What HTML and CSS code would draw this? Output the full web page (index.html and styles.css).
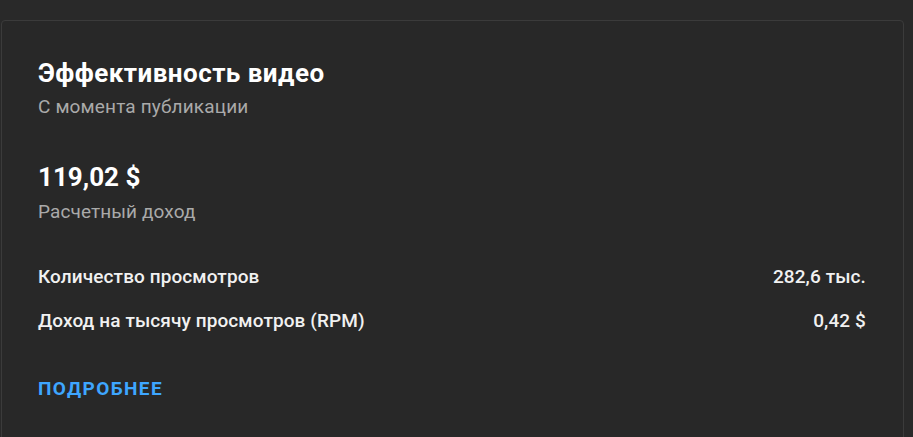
FILE: index.html
```html
<!DOCTYPE html>
<html lang="ru">
<head>
<meta charset="utf-8">
<link rel="stylesheet" href="styles.css">
</head>
<body>
<div class="page">
  <section class="card">
    <h2 class="title">Эффективность видео</h2>
    <div class="subtitle">С момента публикации</div>
    <div class="amount">119,02 $</div>
    <div class="amount-label">Расчетный доход</div>
    <div class="rows">
      <div class="row"><span>Количество просмотров</span><span>282,6 тыс.</span></div>
      <div class="row"><span>Доход на тысячу просмотров (RPM)</span><span>0,42 $</span></div>
    </div>
    <a class="more" href="#">ПОДРОБНЕЕ</a>
  </section>
</div>
</body>
</html>
```
FILE: styles.css
```css
html, body {
  margin: 0;
  padding: 0;
  background: #292929;
  overflow: hidden;
}
.page {
  padding: 20px 9px 0 1px;
  height: 437px;
  box-sizing: border-box;
  font-family: Roboto, "Noto Sans", sans-serif;
}
.card {
  background: #282828;
  border: 1px solid #3b3b3b;
  border-radius: 4px;
  padding: 36px 37px 40px 36px;
  height: 500px;
}
.title {
  margin: 0;
  font-size: 26px;
  line-height: 32px;
  font-weight: 700;
  letter-spacing: 0.45px;
  color: #ffffff;
}
.subtitle {
  margin-top: 6px;
  font-size: 19px;
  line-height: 24px;
  letter-spacing: 0.15px;
  color: #aaaaaa;
}
.amount {
  margin-top: 42px;
  font-size: 26px;
  line-height: 32px;
  font-weight: 700;
  color: #ffffff;
}
.amount-label {
  margin-top: 7px;
  font-size: 19px;
  line-height: 24px;
  letter-spacing: 0.1px;
  color: #aaaaaa;
}
.rows {
  margin-top: 41px;
  display: flex;
  flex-direction: column;
  gap: 20px;
}
.row {
  display: flex;
  justify-content: space-between;
  font-size: 19px;
  line-height: 24px;
  font-weight: 500;
  letter-spacing: 0.1px;
  color: #f1f1f1;
}
.more {
  display: block;
  margin-top: 44px;
  font-size: 19px;
  line-height: 24px;
  font-weight: 700;
  letter-spacing: 1.4px;
  color: #3ea6ff;
  text-decoration: none;
}
```
